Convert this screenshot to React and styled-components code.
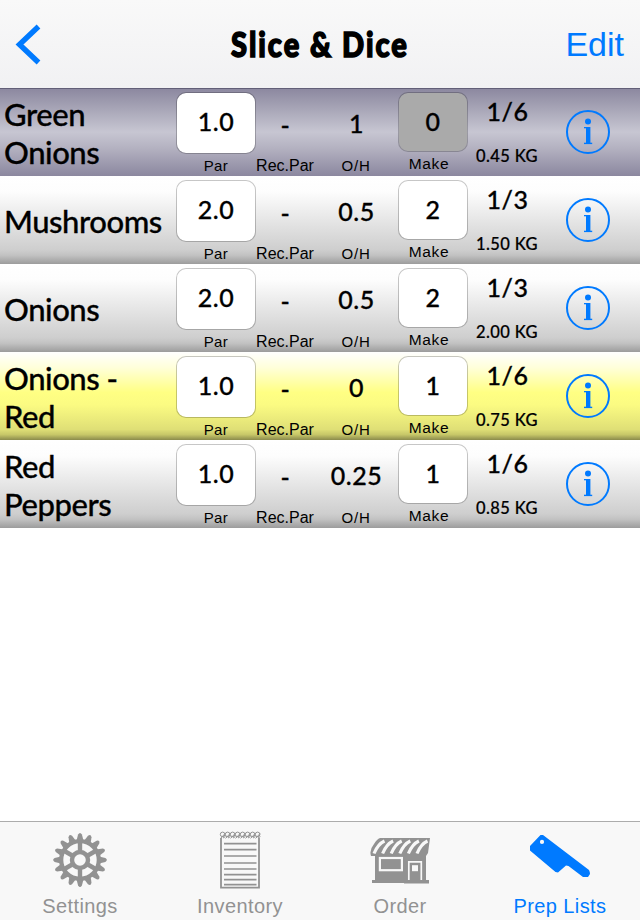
import React from "react";
import styled, { createGlobalStyle } from "styled-components";

const ITEMS = [
  { name: "Green Onions", par: "1.0", onHand: "1", make: "0", unit: "1/6", weight: "0.45 KG", tone: "done" },
  { name: "Mushrooms", par: "2.0", onHand: "0.5", make: "2", unit: "1/3", weight: "1.50 KG", tone: "plain" },
  { name: "Onions", par: "2.0", onHand: "0.5", make: "2", unit: "1/3", weight: "2.00 KG", tone: "plain" },
  { name: "Onions - Red", par: "1.0", onHand: "0", make: "1", unit: "1/6", weight: "0.75 KG", tone: "marked" },
  { name: "Red Peppers", par: "1.0", onHand: "0.25", make: "1", unit: "1/6", weight: "0.85 KG", tone: "plain" },
];

const TONES = {
  done: "linear-gradient(#8b879f 0%, #a9a7b8 25%, #c7c6d2 50%, #b4b2c1 68%, #8b879f 100%)",
  plain:
    "linear-gradient(#ffffff 0%, #fdfdfd 18%, #e6e6e6 50%, #cecece 84%, #c2c2c2 90%, #9c9c9c 100%)",
  marked:
    "linear-gradient(#ffffff 0%, #ffffd9 18%, #ffff83 46%, #fbfb82 60%, #dfdf76 88%, #c6c668 94%, #8a8a4c 100%)",
};

function InfoIcon() {
  return (
    <svg width="46" height="46" viewBox="0 0 46 46" fill="#007aff">
      <circle cx="23" cy="23" r="21" fill="none" stroke="#007aff" strokeWidth="2" />
      <circle cx="23" cy="12.6" r="3" />
      <rect x="21" y="18" width="4.4" height="16.4" />
      <rect x="19" y="18" width="4" height="1.3" />
      <rect x="19" y="33.7" width="8.2" height="1.4" />
    </svg>
  );
}

function GearIcon() {
  const teeth = Array.from({ length: 16 }, (_, i) => i * 22.5);
  const spokes = [0, 60, 120, 180, 240, 300];
  return (
    <svg width="60" height="60" viewBox="-30 -30 60 60">
      <g fill="#929292">
        {teeth.map((a) => (
          <path key={a} d="M-3.6-19L-1.9-25.4Q0-28.4 1.9-25.4L3.6-19Z" transform={`rotate(${a})`} />
        ))}
      </g>
      <circle r="18.8" fill="none" stroke="#929292" strokeWidth="4.2" />
      <circle r="8" fill="none" stroke="#929292" strokeWidth="4.4" />
      <g stroke="#929292" strokeWidth="4.4">
        {spokes.map((a) => (
          <path key={a} d="M0-8V-18" transform={`rotate(${a})`} />
        ))}
      </g>
    </svg>
  );
}

function NotepadIcon() {
  const lines = [13.7, 19.7, 26, 33, 39, 44.7, 49.7, 54.7];
  const rings = [3, 8, 13, 18, 23, 28, 33, 38];
  return (
    <svg width="60" height="60" viewBox="-10 0 60 60" fill="none" stroke="#929292">
      <path d="M1 8V57.6H39V8" strokeWidth="1.8" />
      {lines.map((y) => (
        <path key={y} d={`M4 ${y}H36.5`} strokeWidth="1.7" />
      ))}
      {rings.map((x) => (
        <g key={x} strokeWidth="1">
          <circle cx={x - 0.4} cy="4.4" r="2.3" />
          <path d={`M${x - 2.4} 8.4L${x + 2} 3.6M${x} 8L${x + 2.4} 6.6`} />
        </g>
      ))}
    </svg>
  );
}

function StoreIcon() {
  const stripes = [7, 15.6, 24.2, 32.8, 41.4, 50];
  return (
    <svg width="60" height="60" viewBox="0 0 60 60">
      <g fill="#929292">
        <path d="M10 8H60L58 23L56 26H1Q-1 20 4 14Q7 9 10 8Z" />
        <path d="M5 25H56V50H59V53.5H34V53H2V50H5Z" />
      </g>
      <g fill="none" stroke="#f8f8f8">
        {stripes.map((x) => (
          <path key={x} d={`M${x + 7.5} 11Q${x + 1} 14 ${x - 3} 23.5`} strokeWidth="3.2" />
        ))}
        <rect x="9.9" y="28" width="22" height="12.2" strokeWidth="2.2" />
        <path d="M38.8 50V31.8H51.3V50" strokeWidth="1.7" />
      </g>
      <rect x="42" y="35.2" width="6" height="6" fill="#f8f8f8" />
    </svg>
  );
}

function CleaverIcon() {
  return (
    <svg width="60" height="60" viewBox="0 0 60 60">
      <path
        fill="#007aff"
        fillRule="evenodd"
        d="M10.5 5L13 5L59 40Q60 42 60 44L58 47H53L38.5 36L36 35.5L28 42.5L25.5 42L0 20.5V16ZM12 9.8A2.1 2.1 0 1 0 12 14A2.1 2.1 0 1 0 12 9.8Z"
      />
    </svg>
  );
}

const TABS = [
  { label: "Settings", icon: <GearIcon /> },
  { label: "Inventory", icon: <NotepadIcon /> },
  { label: "Order", icon: <StoreIcon /> },
  { label: "Prep Lists", icon: <CleaverIcon />, active: true },
];

function PrepRow({ item }) {
  return (
    <Row $tone={item.tone}>
      <Name>{item.name}</Name>
      <Cell>
        <ParBox>{item.par}</ParBox>
        <Label $top={3} $spacing={0.4}>Par</Label>
      </Cell>
      <Cell>
        <Value $height={75}>-</Value>
        <Label $top={-6} $size={16}>Rec.Par</Label>
      </Cell>
      <Cell>
        <Value $height={71}>{item.onHand}</Value>
        <Label $top={-2} $spacing={0.8}>O/H</Label>
      </Cell>
      <Cell>
        <MakeBox $off={item.tone === "done"}>{item.make}</MakeBox>
        <MakeLabel $top={3} $size={15.5} $spacing={0.6}>Make</MakeLabel>
      </Cell>
      <Cell>
        <Value $height={46}>{item.unit}</Value>
        <Weight>{item.weight}</Weight>
      </Cell>
      <InfoButton>
        <InfoIcon />
      </InfoButton>
    </Row>
  );
}

function App() {
  return (
    <Screen>
      <GlobalStyle />
      <NavBar>
        <BackButton>
          <svg width="26" height="42" viewBox="0 0 26 42">
            <path d="M23.5 3.5L4.5 21.5L23.5 39.5" fill="none" stroke="#007aff" strokeWidth="5.4" />
          </svg>
        </BackButton>
        <Title>Slice &amp; Dice</Title>
        <EditButton>Edit</EditButton>
      </NavBar>
      <List>
        {ITEMS.map((item) => (
          <PrepRow key={item.name} item={item} />
        ))}
      </List>
      <TabBar>
        {TABS.map((tab) => (
          <Tab key={tab.label} $active={tab.active}>
            {tab.icon}
            <span>{tab.label}</span>
          </Tab>
        ))}
      </TabBar>
    </Screen>
  );
}

const GlobalStyle = createGlobalStyle`
  * {
    box-sizing: border-box;
  }
  body {
    margin: 0;
    background: #fff;
  }
  button {
    padding: 0;
    border: 0;
    background: none;
  }
  svg {
    display: block;
  }
`;

const Screen = styled.div`
  display: flex;
  flex-direction: column;
  width: 640px;
  height: 920px;
  background: #fff;
  color: #000;
  overflow: hidden;
`;

const NavBar = styled.header`
  display: grid;
  grid-template-columns: 140px 1fr 140px;
  align-items: center;
  height: 88px;
  background: linear-gradient(#f9f9f9, #f1f1f3);
`;

const BackButton = styled.button`
  justify-self: start;
  margin-left: 15px;
`;

const Title = styled.h1`
  margin: 0;
  font-family: Lato, sans-serif;
  font-size: 35px;
  font-weight: 900;
  line-height: 86px;
  height: 88px;
  letter-spacing: 2.4px;
  text-align: center;
  white-space: nowrap;
  -webkit-text-stroke: 1.6px #000;
  transform: scaleX(0.83);
`;

const EditButton = styled.button`
  justify-self: end;
  margin-right: 16px;
  color: #007aff;
  font-family: "Liberation Sans", sans-serif;
  font-size: 34px;
  line-height: 88px;
`;

const List = styled.main`
  flex: 1;
`;

const Row = styled.section`
  display: grid;
  grid-template-columns: 176px 80px 58px 84px 70px 78px 84px;
  height: 88px;
  background: ${(p) => TONES[p.$tone]};
  font-family: Lato, sans-serif;
  font-weight: 500;

  &:first-child {
    box-shadow: inset 0 1px #625f78;
  }
`;

const Name = styled.div`
  align-self: center;
  padding: 1px 12px 0 4px;
  font-size: 31px;
  line-height: 38px;
  letter-spacing: -0.45px;
  -webkit-text-stroke: 0.3px #000;
`;

const Cell = styled.div`
  display: flex;
  flex-direction: column;
  align-items: center;
  white-space: nowrap;
`;

const ParBox = styled.div`
  width: 80px;
  height: 62px;
  margin-top: 4px;
  border: 1px solid rgba(0, 0, 0, 0.22);
  border-radius: 10px;
  background: #fff;
  background-clip: padding-box;
  font-size: 25px;
  line-height: 57px;
  letter-spacing: 0.6px;
  text-align: center;
  -webkit-text-stroke: 0.3px #000;
`;

const MakeBox = styled(ParBox)`
  width: 70px;
  height: 60px;
  background-color: ${(p) => (p.$off ? "#aaa" : "#fff")};
`;

const Value = styled.div`
  height: ${(p) => p.$height}px;
  padding-left: 1px;
  font-size: 25px;
  line-height: ${(p) => p.$height}px;
  letter-spacing: 0.5px;
  -webkit-text-stroke: 0.3px #000;
`;

const Label = styled.div`
  margin-top: ${(p) => p.$top}px;
  font-family: "Liberation Sans", sans-serif;
  font-size: ${(p) => p.$size || 15}px;
  font-weight: 400;
  line-height: 18px;
  letter-spacing: ${(p) => p.$spacing || 0}px;
`;

const MakeLabel = styled(Label)`
  margin-right: 8px;
`;

const Weight = styled.div`
  margin-top: 12px;
  font-size: 16.5px;
  line-height: 20px;
  letter-spacing: 0.4px;
  -webkit-text-stroke: 0.2px #000;
`;

const InfoButton = styled.button`
  display: flex;
  align-items: center;
  justify-content: center;
`;

const TabBar = styled.nav`
  display: grid;
  grid-template-columns: repeat(4, 160px);
  height: 99px;
  border-top: 1px solid #acacac;
  background: #f8f8f8;
`;

const Tab = styled.div`
  display: flex;
  flex-direction: column;
  align-items: center;
  padding-top: 8px;
  color: ${(p) => (p.$active ? "#007aff" : "#929292")};
  font-family: "Liberation Sans", sans-serif;
  font-size: 20px;
  line-height: 33px;
  letter-spacing: 0.4px;
`;

export default App;
